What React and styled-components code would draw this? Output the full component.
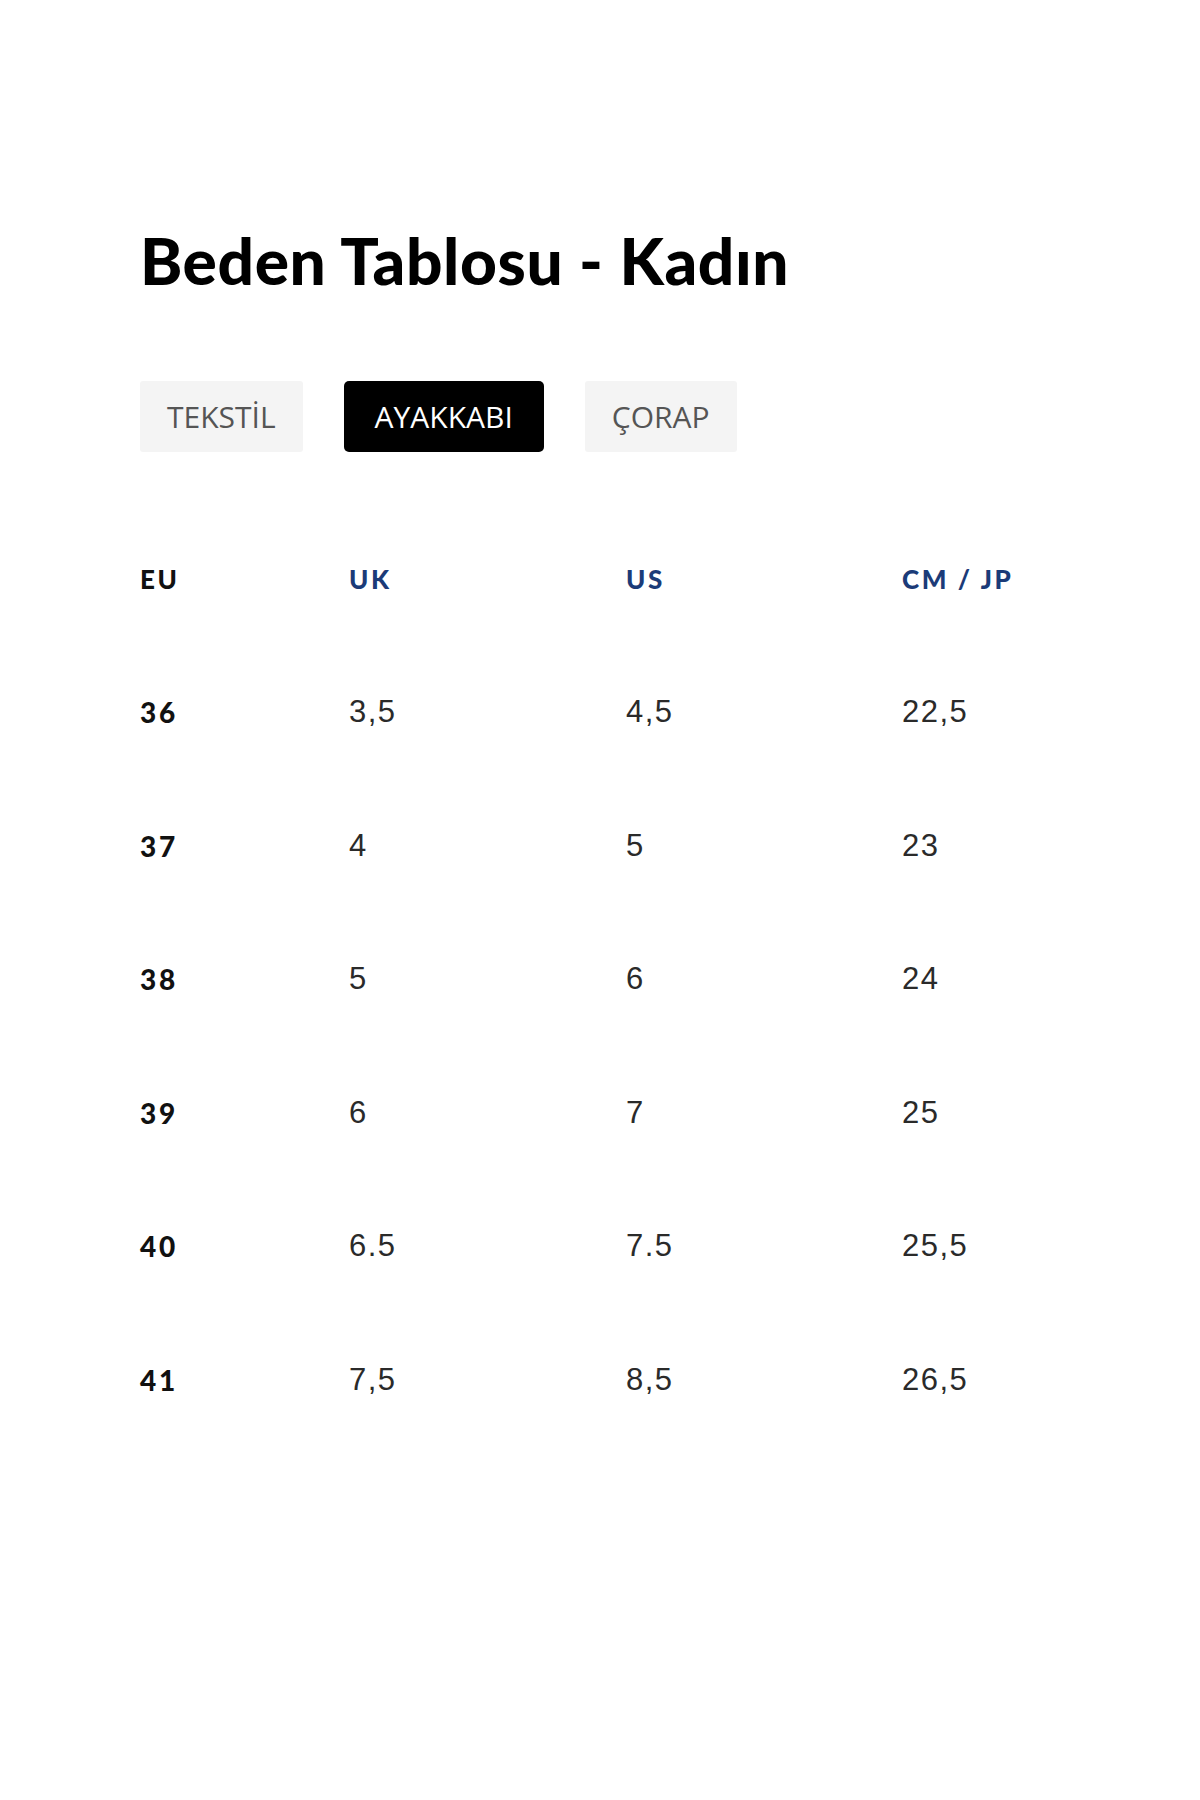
import React from "react";
import styled, { createGlobalStyle } from "styled-components";

const GlobalStyle = createGlobalStyle`
  body {
    margin: 0;
    background: #fff;
    font-family: Lato, "Open Sans", sans-serif;
  }
`;

const sizes = [
  ["36", "3,5", "4,5", "22,5"],
  ["37", "4", "5", "23"],
  ["38", "5", "6", "24"],
  ["39", "6", "7", "25"],
  ["40", "6.5", "7.5", "25,5"],
  ["41", "7,5", "8,5", "26,5"],
];

const Page = styled.div`
  width: 1200px;
  min-height: 1800px;
  padding: 223px 0 0 140px;
  box-sizing: border-box;
`;

const Title = styled.h1`
  margin: 0;
  font-family: Lato, sans-serif;
  font-weight: 900;
  font-size: 64px;
  line-height: 76px;
  color: #000;
  letter-spacing: 0.6px;
`;

const Tabs = styled.div`
  display: flex;
  gap: 41px;
  margin-top: 82px;
`;

const Tab = styled.button`
  height: 71px;
  padding: 0 ${({ active }) => (active ? "31px" : "27px")};
  border: none;
  border-radius: ${({ active }) => (active ? "5px" : "3px")};
  background: ${({ active }) => (active ? "#000" : "#f4f4f4")};
  color: ${({ active }) => (active ? "#fff" : "#555")};
  font-family: "Open Sans", sans-serif;
  font-size: 30px;
  font-weight: 400;
  cursor: pointer;
`;

const Table = styled.div`
  display: grid;
  grid-template-columns: 209px 277px 276px auto;
  grid-auto-rows: 133.5px;
  align-items: center;
  margin-top: 60px;
`;

const Head = styled.div`
  font-family: Lato, sans-serif;
  font-weight: 900;
  font-size: 26px;
  letter-spacing: 2.6px;
  color: ${({ first }) => (first ? "#111" : "#1b3b78")};
`;

const Size = styled.div`
  font-family: Lato, sans-serif;
  font-weight: 900;
  font-size: 28px;
  letter-spacing: 2.8px;
  color: #111;
`;

const Value = styled.div`
  font-family: "Liberation Sans", Arial, sans-serif;
  font-size: 31px;
  letter-spacing: 1.5px;
  color: #2a2a2a;
`;

export default function App() {
  const [tab, setTab] = React.useState("AYAKKABI");

  return (
    <>
      <GlobalStyle />
      <Page>
        <Title>Beden Tablosu - Kadın</Title>
        <Tabs>
          {["TEKSTİL", "AYAKKABI", "ÇORAP"].map((t) => (
            <Tab key={t} active={tab === t} onClick={() => setTab(t)}>
              {t}
            </Tab>
          ))}
        </Tabs>
        <Table>
          <Head first>EU</Head>
          <Head>UK</Head>
          <Head>US</Head>
          <Head>CM / JP</Head>
          {sizes.map((row) => (
            <React.Fragment key={row[0]}>
              <Size>{row[0]}</Size>
              <Value>{row[1]}</Value>
              <Value>{row[2]}</Value>
              <Value>{row[3]}</Value>
            </React.Fragment>
          ))}
        </Table>
      </Page>
    </>
  );
}
